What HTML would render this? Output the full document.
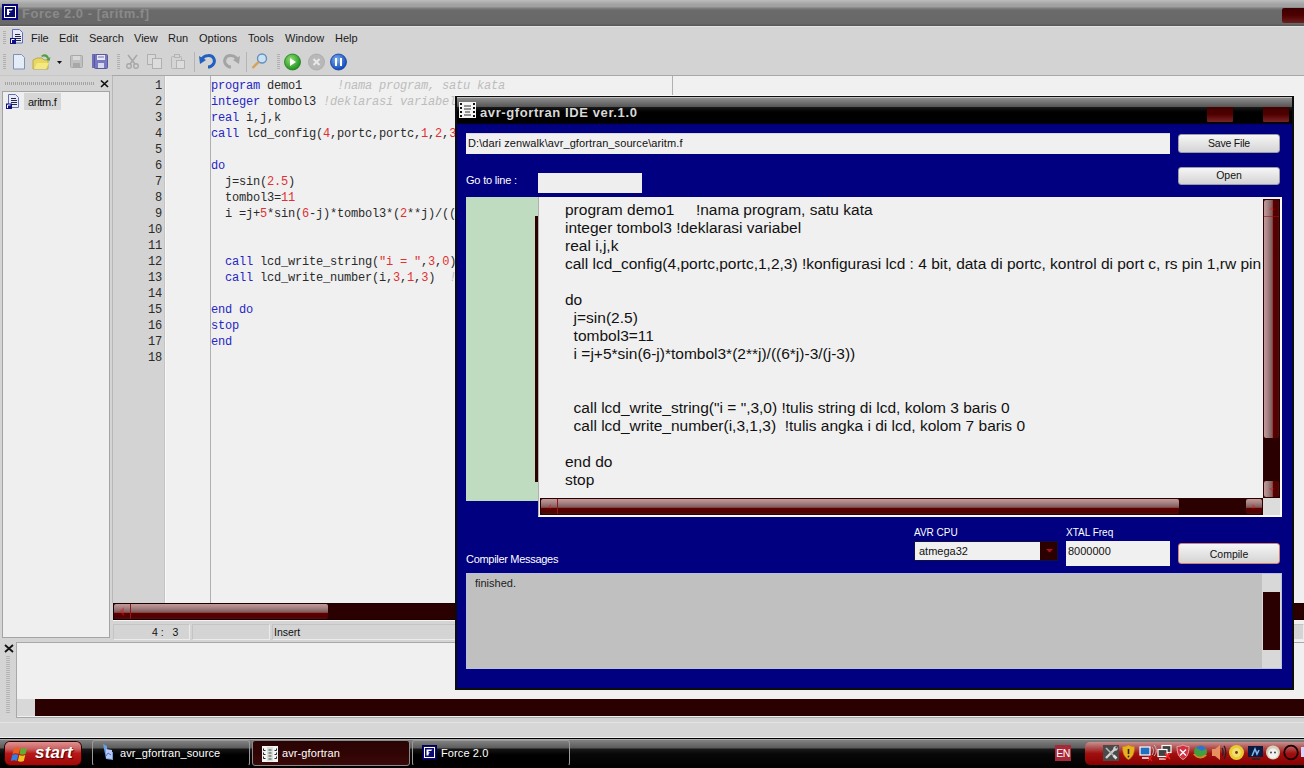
<!DOCTYPE html>
<html><head><meta charset="utf-8">
<style>
*{margin:0;padding:0;box-sizing:border-box}
html,body{width:1304px;height:768px;overflow:hidden;background:#d4d4d4;font-family:"Liberation Sans",sans-serif;position:relative}
.a{position:absolute}
.mono{font-family:"Liberation Mono",monospace}
.ed{font-size:12px;line-height:16px;letter-spacing:-0.2px}
.dc{font-size:15.5px;line-height:18px;color:#111}
.mn{top:31px;font-size:11px;line-height:14px;color:#1a1a1a;white-space:pre}
.dt{font-size:11px;line-height:13px;white-space:pre}
.tb{top:747px;font-size:11px;line-height:13px;color:#fff;white-space:pre;letter-spacing:0.1px}
.k{color:#2626c4}.i{color:#2a2a2a}.n{color:#e03030}.c{color:#bcbcbc;font-style:italic}
</style></head><body>
<!-- main title bar -->
<div class="a" style="left:0;top:0;width:1304px;height:26px;background:linear-gradient(#bcbebc 0px,#a4a4a4 4px,#a0a0a0 6.5px,#7c7c7c 8.5px,#6a6a6a 10.5px,#686868 24px,#5a5a5a 25px,#5a5a5a 26px)"></div>
<svg class="a" style="left:2px;top:4px" width="16" height="16" viewBox="0 0 16 16"><rect width="16" height="16" fill="#08087a"/><rect x="2.5" y="2.5" width="11" height="11" fill="#0a0a70" stroke="#fff"/><path d="M5 5h6l-1.5 1.6H7v1.4h1.6L7 9.6V11H5z" fill="#fff"/></svg>
<div class="a" style="left:22px;top:6px;font-size:13px;line-height:16px;font-weight:bold;letter-spacing:0.5px;color:#8a8a8a;white-space:pre">Force 2.0 - [aritm.f]</div>
<div class="a" style="left:1282px;top:8px;width:22px;height:15px;background:linear-gradient(#3a0000,#500000 50%,#6a2020);border-radius:2px 0 0 2px"></div>

<!-- menu bar -->
<div class="a" style="left:0;top:26px;width:1304px;height:24px;background:#d4d4d4;border-top:1px solid #e4e4e4"></div>
<div class="a" style="left:0;top:50px;width:1304px;height:26px;background:#d3d3d3;border-bottom:1px solid #c8c8c8"></div>
<svg class="a" style="left:0;top:26px" width="360" height="50" viewBox="0 0 360 50">
 <g fill="#b0b0b0"><rect x="3" y="5" width="3" height="1"/><rect x="3" y="7" width="3" height="1"/><rect x="3" y="9" width="3" height="1"/><rect x="3" y="11" width="3" height="1"/><rect x="3" y="13" width="3" height="1"/><rect x="3" y="15" width="3" height="1"/><rect x="3" y="17" width="3" height="1"/></g>
 <path d="M12.5 3.5h7l3 3v10.5h-10z" fill="#e8ecfa" stroke="#6070b0"/>
 <path d="M15 8.5h5M15 10.5h6M15 12.5h6M15 14.5h6" stroke="#101030" stroke-width="0.9"/>
 <rect x="10" y="12" width="6" height="6" fill="#101080"/><path d="M11.5 17v-3.5h3" stroke="#fff" fill="none"/>
 <g fill="#b0b0b0"><rect x="3" y="28" width="3" height="1"/><rect x="3" y="30" width="3" height="1"/><rect x="3" y="32" width="3" height="1"/><rect x="3" y="34" width="3" height="1"/><rect x="3" y="36" width="3" height="1"/><rect x="3" y="38" width="3" height="1"/><rect x="3" y="40" width="3" height="1"/><rect x="3" y="42" width="3" height="1"/></g>
 <!-- new doc -->
 <path d="M13.5 28.5h8l3 3v11.5h-11z" fill="#e4ecf8" stroke="#8090b8"/>
 <!-- open folder -->
 <path d="M33 34l4-2h5l2 2h4v9h-15z" fill="#e8d860" stroke="#b0a040" stroke-width="0.8"/>
 <path d="M34 43l3-6h12l-3 6z" fill="#f4e880"/>
 <path d="M41 30c3-3 7-2 8 2l1.5-1-1 4-3.5-1.5 1.5-.5c-1-2-3-3-5-2z" fill="#50a040"/>
 <path d="M57 35h5l-2.5 3z" fill="#111"/>
 <!-- save disabled -->
 <rect x="70.5" y="29.5" width="12" height="12" rx="1" fill="#c0c0c0" stroke="#a8a8a8"/>
 <rect x="73" y="30" width="7" height="4" fill="#d8d8d8"/><rect x="73" y="37" width="7" height="4" fill="#a8a8a8"/>
 <!-- save all -->
 <rect x="92" y="28" width="3" height="14" fill="#7070b8"/>
 <rect x="94.5" y="28.5" width="13" height="14" rx="1" fill="#7878c0" stroke="#5858a0"/>
 <rect x="97" y="29" width="8" height="5" fill="#e8e8f4"/><path d="M98 31h6" stroke="#7070b0"/>
 <rect x="98" y="37" width="6" height="5" fill="#d8d8ec"/>
 <g fill="#b0b0b0"><rect x="117" y="28" width="3" height="1"/><rect x="117" y="30" width="3" height="1"/><rect x="117" y="32" width="3" height="1"/><rect x="117" y="34" width="3" height="1"/><rect x="117" y="36" width="3" height="1"/><rect x="117" y="38" width="3" height="1"/><rect x="117" y="40" width="3" height="1"/><rect x="117" y="42" width="3" height="1"/></g>
 <!-- cut -->
 <path d="M128 29l7 9M137 29l-7 9" stroke="#a8a8a8" stroke-width="1.6"/>
 <circle cx="129" cy="40" r="2.3" fill="none" stroke="#a8a8a8" stroke-width="1.4"/><circle cx="136" cy="40" r="2.3" fill="none" stroke="#a8a8a8" stroke-width="1.4"/>
 <!-- copy -->
 <rect x="147.5" y="28.5" width="8" height="10" fill="#d8d8d8" stroke="#b0b0b0"/>
 <rect x="152.5" y="32.5" width="9" height="10" fill="#dcdcdc" stroke="#b0b0b0"/>
 <!-- paste -->
 <rect x="171.5" y="30.5" width="10" height="12" rx="1" fill="#d4d4d4" stroke="#b4b4b4"/>
 <rect x="174.5" y="28.5" width="5" height="3" fill="#d4d4d4" stroke="#b4b4b4"/>
 <rect x="176.5" y="34.5" width="8" height="8" fill="#dcdcdc" stroke="#b4b4b4"/>
 <rect x="194" y="26" width="1" height="20" fill="#b4b4b4"/>
 <!-- undo -->
 <path d="M202 33c2-4 10-5 12 0c1.5 4-2 8-6 8" fill="none" stroke="#2060c0" stroke-width="3"/>
 <path d="M199 30l1 8 6-4z" fill="#2060c0"/>
 <!-- redo -->
 <path d="M237 33c-2-4-10-5-12 0c-1.5 4 2 8 6 8" fill="none" stroke="#a4a4a4" stroke-width="3"/>
 <path d="M240 30l-1 8-6-4z" fill="#a4a4a4"/>
 <rect x="246" y="26" width="1" height="20" fill="#b4b4b4"/>
 <!-- find -->
 <circle cx="262" cy="32.5" r="4.5" fill="#c8e0f8" stroke="#6890b8" stroke-width="1.4"/>
 <path d="M258.5 36l-6 6" stroke="#d8a050" stroke-width="2.4"/>
 <g fill="#b0b0b0"><rect x="277" y="28" width="3" height="1"/><rect x="277" y="30" width="3" height="1"/><rect x="277" y="32" width="3" height="1"/><rect x="277" y="34" width="3" height="1"/><rect x="277" y="36" width="3" height="1"/><rect x="277" y="38" width="3" height="1"/><rect x="277" y="40" width="3" height="1"/><rect x="277" y="42" width="3" height="1"/></g>
 <!-- run/stop/pause -->
 <defs><radialGradient id="gg" cx="40%" cy="35%" r="65%"><stop offset="0" stop-color="#90e070"/><stop offset="1" stop-color="#209020"/></radialGradient>
 <radialGradient id="bg" cx="40%" cy="35%" r="65%"><stop offset="0" stop-color="#80b0f0"/><stop offset="1" stop-color="#1048b8"/></radialGradient></defs>
 <circle cx="292.5" cy="36" r="8" fill="url(#gg)" stroke="#208020" stroke-width="0.8"/>
 <path d="M290 32v8l6-4z" fill="#fff"/>
 <circle cx="316.5" cy="36" r="8" fill="#b8b8b8" stroke="#a8a8a8" stroke-width="0.8"/>
 <path d="M313.5 33l6 6M319.5 33l-6 6" stroke="#e8e8e8" stroke-width="2"/>
 <circle cx="338.5" cy="36" r="8" fill="url(#bg)" stroke="#1040a0" stroke-width="0.8"/>
 <path d="M336 32v8M341 32v8" stroke="#fff" stroke-width="2"/>
</svg>
<div class="a mn" style="left:31px">File</div>
<div class="a mn" style="left:59px">Edit</div>
<div class="a mn" style="left:89px">Search</div>
<div class="a mn" style="left:134px">View</div>
<div class="a mn" style="left:168px">Run</div>
<div class="a mn" style="left:199px">Options</div>
<div class="a mn" style="left:248px">Tools</div>
<div class="a mn" style="left:285px">Window</div>
<div class="a mn" style="left:335px">Help</div>

<!-- left panel -->
<svg class="a" style="left:0;top:0" width="113" height="112" viewBox="0 0 113 112">
 <g fill="#a4a4a4"><rect x="5" y="82" width="1" height="3"/><rect x="7" y="82" width="1" height="3"/><rect x="9" y="82" width="1" height="3"/><rect x="11" y="82" width="1" height="3"/><rect x="13" y="82" width="1" height="3"/><rect x="15" y="82" width="1" height="3"/><rect x="17" y="82" width="1" height="3"/><rect x="19" y="82" width="1" height="3"/><rect x="21" y="82" width="1" height="3"/><rect x="23" y="82" width="1" height="3"/><rect x="25" y="82" width="1" height="3"/><rect x="27" y="82" width="1" height="3"/><rect x="29" y="82" width="1" height="3"/><rect x="31" y="82" width="1" height="3"/><rect x="33" y="82" width="1" height="3"/><rect x="35" y="82" width="1" height="3"/><rect x="37" y="82" width="1" height="3"/><rect x="39" y="82" width="1" height="3"/><rect x="41" y="82" width="1" height="3"/><rect x="43" y="82" width="1" height="3"/><rect x="45" y="82" width="1" height="3"/><rect x="47" y="82" width="1" height="3"/><rect x="49" y="82" width="1" height="3"/><rect x="51" y="82" width="1" height="3"/><rect x="53" y="82" width="1" height="3"/><rect x="55" y="82" width="1" height="3"/><rect x="57" y="82" width="1" height="3"/><rect x="59" y="82" width="1" height="3"/><rect x="61" y="82" width="1" height="3"/><rect x="63" y="82" width="1" height="3"/><rect x="65" y="82" width="1" height="3"/><rect x="67" y="82" width="1" height="3"/><rect x="69" y="82" width="1" height="3"/><rect x="71" y="82" width="1" height="3"/><rect x="73" y="82" width="1" height="3"/><rect x="75" y="82" width="1" height="3"/><rect x="77" y="82" width="1" height="3"/><rect x="79" y="82" width="1" height="3"/><rect x="81" y="82" width="1" height="3"/><rect x="83" y="82" width="1" height="3"/><rect x="85" y="82" width="1" height="3"/><rect x="87" y="82" width="1" height="3"/><rect x="89" y="82" width="1" height="3"/><rect x="91" y="82" width="1" height="3"/><rect x="93" y="82" width="1" height="3"/></g>
 <path d="M101 80.5l7 6.5M108 80.5l-7 6.5" stroke="#111" stroke-width="1.7"/>
</svg>
<div class="a" style="left:2px;top:91px;width:108px;height:547px;background:#efefef;border:1px solid #a4a4a4"></div>
<div class="a" style="left:24px;top:93px;width:37px;height:17px;background:#d6d6d6"></div>
<div class="a" style="left:28px;top:96px;font-size:11px;letter-spacing:-0.3px;color:#111">aritm.f</div>
<svg class="a" style="left:0;top:90px" width="24" height="22" viewBox="0 0 24 22">
 <path d="M8.5 4.5h7l3 3v10h-10z" fill="#e8ecfa" stroke="#6070b0"/>
 <path d="M11 8.5h5M11 10.5h6M11 12.5h6M11 14.5h6" stroke="#101030" stroke-width="0.9"/>
 <rect x="6" y="13.5" width="6" height="5.5" fill="#101080"/><path d="M7.5 18v-3h3" stroke="#fff" fill="none"/>
</svg>

<!-- editor -->
<div class="a" style="left:112px;top:76px;width:1px;height:527px;background:#b8b8b8"></div>
<div class="a" style="left:112px;top:75px;width:1192px;height:1px;background:#a8a8a8"></div>
<div class="a" style="left:113px;top:76px;width:343px;height:527px;background:#f0f0f0"></div>
<div class="a" style="left:113px;top:76px;width:51px;height:527px;background:#d3d3d3"></div>
<div class="a" style="left:164px;top:76px;width:1px;height:527px;background:#c4c4c4"></div>
<div class="a" style="left:165px;top:76px;width:1px;height:527px;background:#f8f8f8"></div>
<div class="a" style="left:210px;top:76px;width:1px;height:527px;background:#b0b0b0"></div>
<div class="a" style="left:456px;top:76px;width:848px;height:20px;background:#f0f0f0"></div>
<div class="a" style="left:456px;top:96px;width:848px;height:594px;background:#f0f0f0"></div>
<div class="a" style="left:672px;top:76px;width:1px;height:20px;background:#b0b0b0"></div>

<div class="a mono ed" style="left:211px;top:78px;width:460px;height:526px;overflow:hidden;white-space:pre"><span class="k">program</span><span class="i"> demo1     </span><span class="c">!nama program, satu kata</span>
<span class="k">integer</span><span class="i"> tombol3 </span><span class="c">!deklarasi variabel</span>
<span class="k">real</span><span class="i"> i,j,k</span>
<span class="k">call</span><span class="i"> lcd_config(</span><span class="n">4</span><span class="i">,portc,portc,</span><span class="n">1</span><span class="i">,</span><span class="n">2</span><span class="i">,</span><span class="n">3</span><span class="i">) </span><span class="c">!konfigurasi lcd : 4 bit</span>

<span class="k">do</span>
<span class="i">  j=sin(</span><span class="n">2.5</span><span class="i">)</span>
<span class="i">  tombol3=</span><span class="n">11</span>
<span class="i">  i =j+</span><span class="n">5</span><span class="i">*sin(</span><span class="n">6</span><span class="i">-j)*tombol3*(</span><span class="n">2</span><span class="i">**j)/((</span><span class="n">6</span><span class="i">*j)-</span><span class="n">3</span><span class="i">/(j-</span><span class="n">3</span><span class="i">))</span>


<span class="i">  </span><span class="k">call</span><span class="i"> lcd_write_string(</span><span class="n">&quot;i = &quot;</span><span class="i">,</span><span class="n">3</span><span class="i">,</span><span class="n">0</span><span class="i">) </span><span class="c">!tulis string di lcd</span>
<span class="i">  </span><span class="k">call</span><span class="i"> lcd_write_number(i,</span><span class="n">3</span><span class="i">,</span><span class="n">1</span><span class="i">,</span><span class="n">3</span><span class="i">)  </span><span class="c">!tulis angka i di lcd</span>

<span class="k">end do</span>
<span class="k">stop</span>
<span class="k">end</span>
</div>
<div class="a mono ed" style="left:113px;top:78px;width:49px;text-align:right;white-space:pre;color:#2a2a2a">1
2
3
4
5
6
7
8
9
10
11
12
13
14
15
16
17
18</div>

<!-- editor h-scroll -->
<div class="a" style="left:113px;top:603px;width:1191px;height:17px;background:#2a0000;border:1px solid #1a0000"></div>
<div class="a" style="left:114px;top:604px;width:214px;height:15px;background:linear-gradient(#c49a9a 0%,#a88282 25%,#7e6060 52%,#884040 57%,#5c0000 62%,#520000 85%,#4a1010 100%);border-radius:2px"></div>
<div class="a" style="left:130px;top:604px;width:1px;height:15px;background:#901818"></div>
<svg class="a" style="left:118px;top:607px" width="8" height="9"><path d="M6 0v9l-5-4.5z" fill="#d02020" opacity="0.45"/></svg>
<div class="a" style="left:113px;top:620px;width:1191px;height:1px;background:#f4f4f4"></div>
<!-- status bar -->
<div class="a" style="left:113px;top:624px;width:77px;height:16px;background:#d4d4d4;border:1px solid #c4c4c4;border-right-color:#ececec;border-bottom-color:#ececec"></div>
<div class="a" style="left:192px;top:624px;width:78px;height:16px;background:#d4d4d4;border:1px solid #c4c4c4;border-right-color:#ececec;border-bottom-color:#ececec"></div>
<div class="a" style="left:272px;top:624px;width:1032px;height:16px;background:#d4d4d4;border:1px solid #c4c4c4;border-right-color:#ececec;border-bottom-color:#ececec"></div>
<div class="a dt" style="left:152px;top:626px;font-size:10.5px;color:#111">4 :   3</div>
<div class="a dt" style="left:274px;top:626px;font-size:10.5px;color:#111">Insert</div>

<!-- output panel -->
<svg class="a" style="left:0;top:640px" width="16" height="80" viewBox="0 640 16 80">
 <path d="M5 645l8 7M13 645l-8 7" stroke="#111" stroke-width="1.8"/>
 <g fill="#b4b4b4"><rect x="6" y="656" width="4" height="1"/><rect x="6" y="658" width="4" height="1"/><rect x="6" y="660" width="4" height="1"/><rect x="6" y="662" width="4" height="1"/><rect x="6" y="664" width="4" height="1"/><rect x="6" y="666" width="4" height="1"/><rect x="6" y="668" width="4" height="1"/><rect x="6" y="670" width="4" height="1"/><rect x="6" y="672" width="4" height="1"/><rect x="6" y="674" width="4" height="1"/><rect x="6" y="676" width="4" height="1"/><rect x="6" y="678" width="4" height="1"/><rect x="6" y="680" width="4" height="1"/><rect x="6" y="682" width="4" height="1"/><rect x="6" y="684" width="4" height="1"/><rect x="6" y="686" width="4" height="1"/><rect x="6" y="688" width="4" height="1"/><rect x="6" y="690" width="4" height="1"/><rect x="6" y="692" width="4" height="1"/><rect x="6" y="694" width="4" height="1"/><rect x="6" y="696" width="4" height="1"/><rect x="6" y="698" width="4" height="1"/><rect x="6" y="700" width="4" height="1"/><rect x="6" y="702" width="4" height="1"/><rect x="6" y="704" width="4" height="1"/><rect x="6" y="706" width="4" height="1"/><rect x="6" y="708" width="4" height="1"/><rect x="6" y="710" width="4" height="1"/><rect x="6" y="712" width="4" height="1"/></g>
</svg>
<div class="a" style="left:16px;top:642px;width:1288px;height:76px;background:#f0f0f0;border:1px solid #a8a8a8;border-right:none"></div>
<div class="a" style="left:17px;top:699px;width:1287px;height:17px;background:#d8d8d8"></div>
<div class="a" style="left:35px;top:699px;width:1269px;height:17px;background:#2a0000"></div>
<div class="a" style="left:0;top:722px;width:1304px;height:15px;background:#d6d6d6;border-top:1px solid #e4e4e4"></div>

<!-- taskbar -->
<div class="a" style="left:0;top:737px;width:1304px;height:1px;background:#f0f0f0"></div>
<div class="a" style="left:0;top:738px;width:1304px;height:30px;background:linear-gradient(#000 0px,#000 1px,#a8a8a8 1px,#a8a8a8 2px,#828282 2px,#5a5a5a 10px,#1a1a1a 11px,#080808 16px,#000 30px)"></div>
<div class="a" style="left:5px;top:742px;width:76px;height:23px;background:linear-gradient(#e09090 0%,#c86060 30%,#b81818 50%,#a00808 100%);border-radius:5px;box-shadow:0 0 0 1px #300000"></div>
<svg class="a" style="left:11px;top:745px" width="20" height="18" viewBox="0 0 20 18">
 <path d="M3 3c2-1 4-1 6 0l-1.5 6c-2-1-4-1-6 0z" fill="#e86020"/>
 <path d="M10 3c2 1 4 1 6 0l-1.5 6c-2 1-4 1-6 0z" fill="#60b030"/>
 <path d="M1.3 10c2-1 4-1 6 0l-1.5 6c-2-1-4-1-6 0z" fill="#3080e0"/>
 <path d="M8.3 10c2 1 4 1 6 0l-1.5 6c-2 1-4 1-6 0z" fill="#f0c020"/>
</svg>
<div class="a" style="left:35px;top:743px;font-size:17px;line-height:20px;font-weight:bold;font-style:italic;color:#fff;letter-spacing:0.2px;text-shadow:1px 1px 1px #500000">start</div>

<div class="a" style="left:92px;top:740px;width:158px;height:26px;border:1px solid #9a9a9a;border-bottom-color:#000;border-radius:3px;background:linear-gradient(#808080 0px,#5c5c5c 7px,#161616 8px,#000 14px,#000 100%)"></div>
<svg class="a" style="left:101px;top:743px" width="14" height="18" viewBox="0 0 14 18">
 <path d="M2 1l4 2v5l6 1v8l-7-1z" fill="#6aa0e0"/><path d="M5 6l6 1v9l-6-1z" fill="#b8c8f8"/><path d="M5 13l2-3 3 2" stroke="#3060b0" fill="none" stroke-width="0.8"/>
</svg>
<div class="a tb" style="left:120px">avr_gfortran_source</div>

<div class="a" style="left:252px;top:740px;width:158px;height:26px;border:1px solid #8a8a8a;border-radius:3px;background:linear-gradient(#2a0404 0%,#300404 50%,#3a0a0a 100%)"></div>
<svg class="a" style="left:262px;top:746px" width="17" height="17" viewBox="0 0 17 17">
 <rect x="0" y="0" width="16" height="16" fill="#f4f4f4"/><rect x="5" y="1" width="6" height="14" fill="#d8e0d8"/>
 <g fill="none" stroke="#111" stroke-width="0.9"><path d="M1.5 2.5v2h2M1.5 6.5v2h2M1.5 10.5v2h2M14.5 2.5v2h-2M14.5 6.5v2h-2M14.5 10.5v2h-2"/></g>
 <path d="M6.5 4h3M6.5 7h3M6.5 10h3M6.5 13h3" stroke="#333" stroke-width="0.9"/>
</svg>
<div class="a tb" style="left:282px">avr-gfortran</div>

<div class="a" style="left:412px;top:740px;width:158px;height:26px;border:1px solid #9a9a9a;border-bottom-color:#000;border-radius:3px;background:linear-gradient(#808080 0px,#5c5c5c 7px,#161616 8px,#000 14px,#000 100%)"></div>
<div class="a" style="left:422px;top:745px;width:15px;height:15px;background:#0a0a70;border:1px solid #000050"></div>
<svg class="a" style="left:422px;top:745px" width="15" height="15" viewBox="0 0 15 15"><rect x="2.5" y="2.5" width="10" height="10" fill="#0a0a70" stroke="#fff"/><path d="M4.5 4.5h6l-1.5 1.5H6.5v1.5h1.5L6.5 9v1.5h-2z" fill="#fff"/></svg>
<div class="a tb" style="left:441px">Force 2.0</div>

<div class="a" style="left:1055px;top:745px;width:16px;height:16px;background:#a82838"></div>
<div class="a" style="left:1055px;top:747px;width:16px;text-align:center;font-size:10.5px;line-height:12px;color:#fff;letter-spacing:-0.6px">EN</div>
<div class="a" style="left:1085px;top:742px;width:219px;height:23px;border-radius:5px 0 0 5px;background:linear-gradient(#c89090 0%,#b05050 25%,#a01010 50%,#880000 100%)"></div>
<svg class="a" style="left:1100px;top:742px" width="204" height="23" viewBox="1100 742 204 23">
 <!-- tools -->
 <rect x="1103" y="745" width="16" height="16" fill="#4a4a4a"/>
 <path d="M1106 758l9-9" stroke="#d0d0d0" stroke-width="2.4"/><circle cx="1115.5" cy="748.5" r="2.2" fill="#d0d0d0"/><circle cx="1116.3" cy="747.7" r="0.9" fill="#4a4a4a"/>
 <path d="M1106 748l8 8" stroke="#b8b8b8" stroke-width="1.6"/><path d="M1113.5 755.5l3 3" stroke="#e0e0e0" stroke-width="2.6"/>
 <!-- shield -->
 <path d="M1128.5 745c2 1 4 1.5 6 1.5c0 7-2 11-6 13c-4-2-6-6-6-13c2 0 4-.5 6-1.5z" fill="#e8b020" stroke="#c08010" stroke-width="0.6"/>
 <path d="M1128.5 749v5" stroke="#222" stroke-width="1.6"/><circle cx="1128.5" cy="756.5" r="0.9" fill="#222"/>
 <!-- network 1 -->
 <rect x="1140" y="747" width="10" height="8" fill="#2070c0" stroke="#fff" stroke-width="1.2"/>
 <path d="M1142 758h7" stroke="#fff" stroke-width="1.5"/>
 <path d="M1152 747c2 2 2 5 0 8M1154 745c3 3 3 8 0 11" stroke="#c8c8c8" fill="none" stroke-width="0.9"/>
 <path d="M1148 756l4 5M1152 756l-4 5" stroke="#e02020" stroke-width="1.2"/>
 <!-- network 2 -->
 <rect x="1162" y="745.5" width="9" height="7" fill="#404040" stroke="#fff" stroke-width="1.2"/>
 <rect x="1158" y="749.5" width="9" height="7" fill="#404040" stroke="#fff" stroke-width="1.2"/>
 <path d="M1159 759h7" stroke="#fff" stroke-width="1.2"/>
 <path d="M1165 753l5 6M1170 753l-5 6" stroke="#ff2020" stroke-width="1.6"/>
 <!-- red shield -->
 <path d="M1183 745c2 1 4 1.5 6 1.5c0 7-2 11-6 13c-4-2-6-6-6-13c2 0 4-.5 6-1.5z" fill="#d03040" stroke="#f0c0c0" stroke-width="0.8"/>
 <path d="M1180 749.5l6 6M1186 749.5l-6 6" stroke="#fff" stroke-width="1.4"/>
 <!-- idm globe -->
 <circle cx="1200.5" cy="752" r="6.5" fill="#40a040"/>
 <path d="M1196 748a6 6 0 0 1 10 1l-4 2z" fill="#3070d0"/>
 <path d="M1193 754c3 5 10 6 14 1l-3 0c-3 3-7 2-9-1z" fill="#e88020"/>
 <!-- speaker -->
 <path d="M1212 749h3l5-4v15l-5-4h-3z" fill="#e89060"/>
 <path d="M1222 748c1.5 2 1.5 6 0 8M1224 746c2.5 3 2.5 10 0 13" stroke="#202020" fill="none" stroke-width="1.2"/>
 <!-- cd -->
 <circle cx="1236.5" cy="752.5" r="7.5" fill="#e8cc30"/>
 <circle cx="1236.5" cy="752.5" r="4.5" fill="#f0e070"/>
 <circle cx="1236.5" cy="752.5" r="1.4" fill="#803010"/>
 <!-- monitor -->
 <rect x="1248" y="746" width="15" height="11" fill="#0a1a40"/>
 <path d="M1252 756l3-7 2 5 2-4" stroke="#80b8f0" fill="none" stroke-width="1.6"/>
 <path d="M1252 759h8" stroke="#222" stroke-width="1.5"/>
 <!-- monkey -->
 <circle cx="1273" cy="752.5" r="7" fill="#d8d0b8"/>
 <circle cx="1273" cy="753.5" r="5" fill="#f0f0f0"/>
 <circle cx="1271" cy="752.5" r="0.9" fill="#333"/><circle cx="1275" cy="752.5" r="0.9" fill="#333"/>
 <!-- ring -->
 <circle cx="1291" cy="752.5" r="6.8" fill="none" stroke="#180000" stroke-width="1.8"/>
 <rect x="1301" y="747" width="3" height="10" fill="#d0d8ff"/>
</svg>

<!-- dialog -->
<div class="a" style="left:455px;top:96px;width:839px;height:594px;background:#000080;border:2px solid #0c0c0c;border-top-width:1px;border-right-width:2px;border-bottom-width:2px"></div>
<div class="a" style="left:455px;top:95px;width:839px;height:1px;background:#fafafa"></div>
<div class="a" style="left:457px;top:97px;width:835px;height:28px;background:linear-gradient(#c0c0c0 0px,#c0c0c0 1px,#8c8c8c 1px,#747474 5px,#545454 10px,#1a1a1a 10px,#000 15px,#000 26px,#000050 27px,#000080 28px)"></div>
<svg class="a" style="left:459px;top:102px" width="18" height="17" viewBox="0 0 18 17">
 <rect x="0" y="0" width="17" height="16" fill="#f4f4f4"/>
 <g fill="#111"><rect x="1" y="1" width="2" height="2"/><rect x="1" y="5" width="2" height="2"/><rect x="1" y="9" width="2" height="2"/><rect x="1" y="13" width="2" height="2"/>
 <rect x="14" y="1" width="2" height="2"/><rect x="14" y="5" width="2" height="2"/><rect x="14" y="9" width="2" height="2"/><rect x="14" y="13" width="2" height="2"/></g>
 <path d="M5 4h7M5 7h7M6 10h5M5 13h7" stroke="#333" stroke-width="1"/>
</svg>
<div class="a" style="left:480px;top:105px;font-size:13px;font-weight:bold;letter-spacing:0.6px;color:#d8d8d8;white-space:pre">avr-gfortran IDE ver.1.0</div>
<div class="a" style="left:1207px;top:107px;width:26px;height:15px;background:linear-gradient(#400000,#500000 50%,#7a2424);border-radius:1px"></div>
<div class="a" style="left:1263px;top:107px;width:26px;height:15px;background:linear-gradient(#400000,#500000 50%,#7a2424);border-radius:1px"></div>

<div class="a" style="left:466px;top:133px;width:704px;height:21px;background:#f0f0f0;border-top:1px solid #d8d8e8"></div>
<div class="a dt" style="left:468px;top:137px;color:#111;letter-spacing:0.1px">D:\dari zenwalk\avr_gfortran_source\aritm.f</div>
<div class="a dt" style="left:466px;top:174px;color:#fff;letter-spacing:-0.2px">Go to line :</div>
<div class="a" style="left:538px;top:173px;width:104px;height:20px;background:#eeeeee"></div>
<div class="a" style="left:1178px;top:134px;width:102px;height:19px;background:linear-gradient(#f6f6f6 0%,#e8e8e8 40%,#d4d4d4 100%);border-radius:3px;border:1px solid #9a9aa8"></div>
<div class="a" style="left:1178px;top:167px;width:102px;height:18px;background:linear-gradient(#f6f6f6 0%,#e8e8e8 40%,#d4d4d4 100%);border-radius:3px;border:1px solid #9a9aa8"></div>
<div class="a dt" style="left:1178px;top:137px;width:102px;text-align:center;font-size:10.5px;color:#111;letter-spacing:-0.2px">Save File</div>
<div class="a dt" style="left:1178px;top:169px;width:102px;text-align:center;font-size:10.5px;color:#111">Open</div>

<!-- code area -->
<div class="a" style="left:466px;top:197px;width:72px;height:304px;background:#c0dcc0"></div>
<div class="a" style="left:535px;top:216px;width:3px;height:266px;background:#2a0000"></div>
<div class="a" style="left:538px;top:197px;width:744px;height:320px;background:#f0f0f0;border-left:1px solid #b0b0b0;border-right:2px solid #f8f8f8;border-bottom:2px solid #f8f8f8"></div>
<div class="a" style="left:540px;top:199px;width:723px;height:299px;overflow:hidden"><div class="a dc" style="left:25px;top:1.5px;white-space:pre">program demo1     !nama program, satu kata
integer tombol3 !deklarasi variabel
real i,j,k
call lcd_config(4,portc,portc,1,2,3) !konfigurasi lcd : 4 bit, data di portc, kontrol di port c, rs pin 1,rw pin 2, en pin 3

do
  j=sin(2.5)
  tombol3=11
  i =j+5*sin(6-j)*tombol3*(2**j)/((6*j)-3/(j-3))


  call lcd_write_string(&quot;i = &quot;,3,0) !tulis string di lcd, kolom 3 baris 0
  call lcd_write_number(i,3,1,3)  !tulis angka i di lcd, kolom 7 baris 0

end do
stop</div></div>
<!-- v scroll -->
<div class="a" style="left:1263px;top:199px;width:17px;height:299px;background:#2a0000"></div>
<div class="a" style="left:1264px;top:200px;width:15px;height:238px;background:linear-gradient(90deg,#c49a9a 0%,#a88282 25%,#7e6060 52%,#884040 57%,#5c0000 62%,#520000 85%,#4a1010 100%);border-radius:2px"></div>
<div class="a" style="left:1264px;top:481px;width:15px;height:16px;background:linear-gradient(90deg,#c49a9a 0%,#a88282 25%,#7e6060 52%,#884040 57%,#5c0000 62%,#520000 85%,#4a1010 100%);border-radius:2px"></div>
<!-- h scroll -->
<div class="a" style="left:540px;top:498px;width:723px;height:17px;background:#2a0000"></div>
<div class="a" style="left:541px;top:499px;width:638px;height:15px;background:linear-gradient(#c49a9a 0%,#a88282 25%,#7e6060 52%,#884040 57%,#5c0000 62%,#520000 85%,#4a1010 100%);border-radius:2px"></div>
<div class="a" style="left:1246px;top:499px;width:16px;height:15px;background:linear-gradient(#c49a9a 0%,#a88282 25%,#7e6060 52%,#884040 57%,#5c0000 62%,#520000 85%,#4a1010 100%);border-radius:2px"></div>
<div class="a" style="left:1263px;top:498px;width:17px;height:17px;background:#dcdcdc"></div>
<svg class="a" style="left:540px;top:198px" width="742" height="318" viewBox="540 198 742 318">
 <g fill="#e02020" opacity="0.5">
 <path d="M1269 210h5l-2.5-3z"/>
 <path d="M1269 488h5l-2.5 3z"/>
 <path d="M1252.5 504v5l3-2.5z"/>
 <path d="M551 504v5l-3-2.5z"/>
 </g>
 <rect x="557" y="499" width="1" height="15" fill="#901818"/>
 <rect x="1264" y="216" width="15" height="1" fill="#901818" opacity="0.6"/>
</svg>

<div class="a dt" style="left:466px;top:553px;color:#fff;letter-spacing:-0.3px">Compiler Messages</div>
<div class="a dt" style="left:914px;top:526px;color:#fff;font-size:10px">AVR CPU</div>
<div class="a dt" style="left:1066px;top:526px;color:#fff;font-size:10px">XTAL Freq</div>
<div class="a" style="left:914px;top:541px;width:144px;height:20px;background:#f0f0f0;border:1px solid #101040"></div>
<div class="a" style="left:1040px;top:542px;width:17px;height:18px;background:#2a0000"></div>
<svg class="a" style="left:1046px;top:549px" width="7" height="4"><path d="M0 0h7l-3.5 3.5z" fill="#b01018"/></svg>
<div class="a dt" style="left:919px;top:545px;color:#111">atmega32</div>
<div class="a" style="left:1066px;top:541px;width:104px;height:25px;background:#f0f0f0"></div>
<div class="a dt" style="left:1068px;top:545px;color:#111">8000000</div>
<div class="a" style="left:1178px;top:543px;width:102px;height:21px;background:linear-gradient(#f6f6f6 0%,#e8e8e8 40%,#d4d4d4 100%);border-radius:3px;border:1px solid #9a9aa8;border-color:#d08070"></div>
<div class="a dt" style="left:1178px;top:548px;width:102px;text-align:center;font-size:10.5px;color:#111">Compile</div>

<div class="a" style="left:466px;top:573px;width:816px;height:96px;background:#c0c0c0;border:1px solid #b8c0e0"></div>
<div class="a" style="left:1262px;top:574px;width:19px;height:94px;background:#d8d8d8"></div>
<div class="a" style="left:1263px;top:592px;width:17px;height:58px;background:#2a0000"></div>
<div class="a dt" style="left:475px;top:577px;color:#222">finished.</div>
</body></html>
